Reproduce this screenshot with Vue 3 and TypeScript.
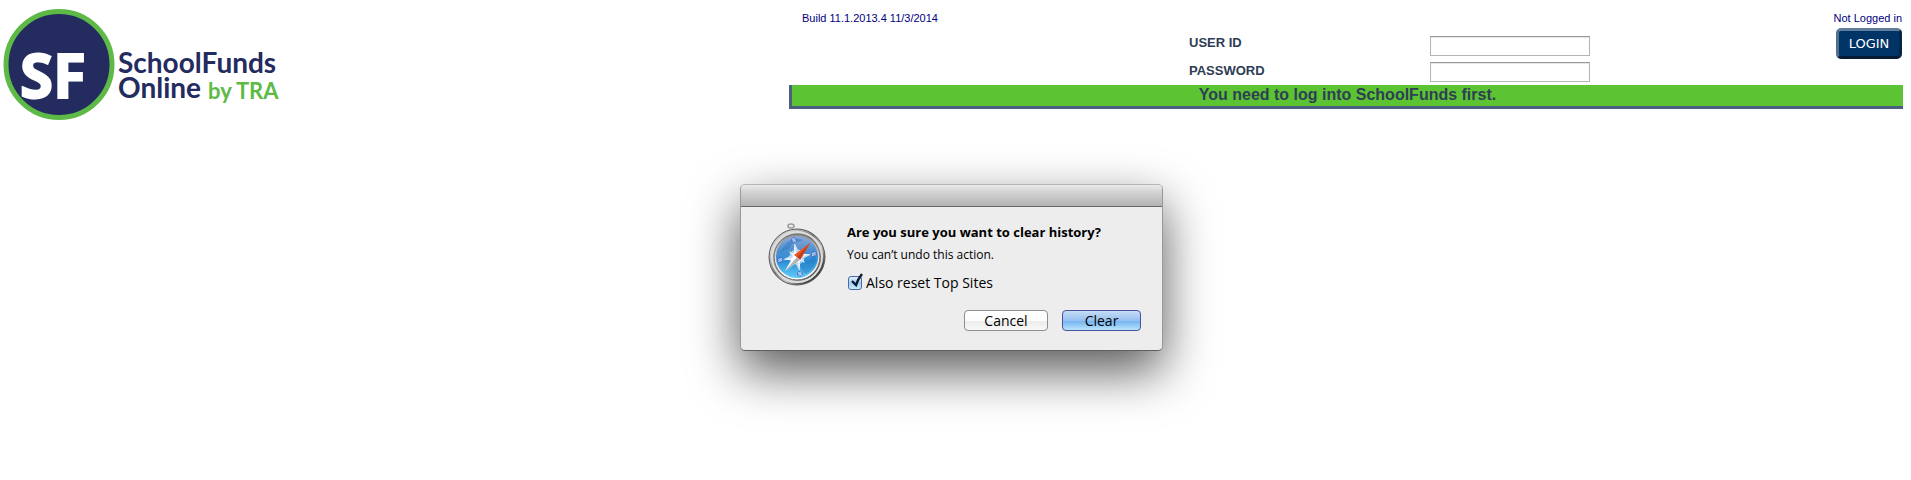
<script setup lang="ts">
import { ref } from 'vue'

const build = 'Build 11.1.2013.4 11/3/2014'
const userId = ref('')
const password = ref('')
const dialogOpen = ref(true)
const resetTopSites = ref(true)

const ticks = [0, 90, 180, 270]

function closeDialog(): void {
  dialogOpen.value = false
}
</script>

<template>
  <div class="page">
    <header class="header">
      <a class="brand" href="#" aria-label="SchoolFunds Online by TRA">
        <svg class="logo" width="284" height="124" viewBox="0 0 284 124">
          <circle cx="59" cy="64.5" r="53" fill="#232b5f" stroke="#5dba47" stroke-width="5" />
          <text class="logo-initials" x="20" y="98">SF</text>
          <text class="logo-name" x="118" y="73">SchoolFunds</text>
          <text class="logo-name" x="118" y="98">Online</text>
          <text class="logo-by" x="208" y="99">by TRA</text>
        </svg>
      </a>

      <form class="panel" @submit.prevent>
        <div class="status">
          <span>{{ build }}</span>
          <span>Not Logged in</span>
        </div>
        <div class="credentials">
          <div class="labels">
            <label for="user-id">USER ID</label>
            <label for="password">PASSWORD</label>
          </div>
          <div class="fields">
            <input id="user-id" v-model="userId" type="text" />
            <input id="password" v-model="password" type="password" />
          </div>
          <button class="login" type="submit">LOGIN</button>
        </div>
        <p class="notice">You need to log into SchoolFunds first.</p>
      </form>
    </header>

    <section v-if="dialogOpen" class="dialog" role="alertdialog" aria-labelledby="dialog-title">
      <div class="titlebar"></div>
      <div class="dialog-body">
        <svg class="compass" width="60" height="66" viewBox="0 0 60 66" aria-hidden="true">
          <defs>
            <linearGradient id="rim" x1="0" y1="0" x2="1" y2="1">
              <stop offset="0" stop-color="#777" />
              <stop offset="0.2" stop-color="#d4d4d4" />
              <stop offset="0.45" stop-color="#777" />
              <stop offset="0.62" stop-color="#c4c4c4" />
              <stop offset="0.8" stop-color="#444" />
              <stop offset="1" stop-color="#222" />
            </linearGradient>
            <linearGradient id="bezel" x1="0" y1="0" x2="0" y2="1">
              <stop offset="0" stop-color="#8b8b8b" />
              <stop offset="0.5" stop-color="#d8d8d8" />
              <stop offset="1" stop-color="#ffffff" />
            </linearGradient>
            <linearGradient id="face" x1="0" y1="0" x2="0" y2="1">
              <stop offset="0" stop-color="#8fa9d6" />
              <stop offset="0.35" stop-color="#4d8fd0" />
              <stop offset="0.6" stop-color="#2b8fd8" />
              <stop offset="1" stop-color="#63cdf6" />
            </linearGradient>
          </defs>
          <ellipse cx="24" cy="4" rx="3" ry="2" fill="none" stroke="#999" stroke-width="1.5" />
          <path d="M21 8h6l1 3h-8z" fill="#aaa" />
          <circle cx="30" cy="35" r="28" fill="url(#rim)" stroke="#5a5a5a" />
          <circle cx="30" cy="35" r="25" fill="none" stroke="#dedede" stroke-width="2" />
          <circle cx="30" cy="35" r="23" fill="url(#bezel)" stroke="#6d6d6d" />
          <circle cx="30" cy="35" r="21" fill="url(#face)" />
          <path
            d="M13 32c4-6 9-3 11-8s8-3 12-6c-7-4-18-1-23 14zM33 42c4-4 8-2 11-5 2-3 4-2 5 0-1 7-5 12-10 15-3-2-6-6-6-10z"
            fill="#2478be"
            opacity="0.45"
          />
          <g transform="rotate(-10 30 35)">
            <g v-for="angle in ticks" :key="angle" :transform="`rotate(${angle} 30 35)`">
              <path d="M30 21l3 11-3 3-3-3z" fill="#fff" />
              <path d="M30 21l3 11-3 3z" fill="#c3daf0" />
              <path d="M37 28l-3 6-3-3z" fill="#e6f4ff" />
              <circle cx="30" cy="18" r="3" fill="#4169c6" opacity="0.7" />
              <path d="M29 20v-4l2 4v-4" fill="none" stroke="#cfe2fa" stroke-width="0.8" />
            </g>
            <circle cx="30" cy="35" r="7" fill="none" stroke="#c7e1f5" stroke-width="1" />
          </g>
          <path d="M43 21L27 33l6 5z" fill="#f0521f" />
          <path d="M43 21L30 35l3 3z" fill="#c63d18" />
          <path d="M18 49l9-16 6 5z" fill="#fff" />
          <path d="M18 49l12-14 3 3z" fill="#b5b5b9" />
        </svg>

        <div class="message">
          <h1 id="dialog-title">Are you sure you want to clear history?</h1>
          <p>You can’t undo this action.</p>
          <label class="option">
            <span class="tickbox">
              <input v-model="resetTopSites" type="checkbox" />
              <svg v-if="resetTopSites" width="16" height="16" viewBox="0 0 16 16" aria-hidden="true">
                <path d="M3 8l4 4q2-6 6-11" fill="none" stroke="#0b1a35" stroke-width="2.4" />
              </svg>
            </span>
            <span>Also reset Top Sites</span>
          </label>
        </div>
      </div>
      <div class="actions">
        <button class="cancel" type="button" @click="closeDialog">Cancel</button>
        <button class="clear" type="button" @click="closeDialog">Clear</button>
      </div>
    </section>
  </div>
</template>

<style>
body {
  margin: 0;
  background: #fff;
}
</style>

<style scoped>
.page {
  padding: 0 8px 80px 0;
  font-family: 'Liberation Sans', Arial, sans-serif;
}

.header {
  display: flex;
  justify-content: space-between;
  align-items: flex-start;
}

.brand,
.logo {
  display: block;
}

.logo-initials {
  font: 700 60px 'Open Sans', sans-serif;
  fill: #fff;
  stroke: #fff;
  stroke-width: 2px;
}

.logo-name {
  font: 700 28px Lato, sans-serif;
  fill: #232b5f;
}

.logo-by {
  font: 700 22px Lato, sans-serif;
  fill: #5dba47;
}

.panel {
  width: 58.54%;
  padding-top: 11px;
}

.status {
  display: flex;
  justify-content: space-between;
  padding: 0 1px 0 13px;
  font-size: 11px;
  line-height: 14px;
  color: #000080;
}

.credentials {
  display: flex;
  justify-content: flex-end;
  align-items: flex-start;
  padding: 3px 1px 0 0;
}

.labels {
  display: flex;
  flex-direction: column;
  width: 241px;
  color: #2e3d54;
  font-size: 13px;
  font-weight: 700;
  line-height: 29px;
}

.labels label {
  height: 28px;
}

.fields {
  display: flex;
  flex-direction: column;
  gap: 6px;
  margin: 8px 246px 3px 0;
}

.fields input {
  box-sizing: border-box;
  width: 160px;
  height: 20px;
  padding: 1px 3px;
  border: 1px solid #b4b4b4;
  border-top-color: #999;
  box-shadow: inset 0 1px 1px #e4e4e4;
  background: #fff;
  font-size: 13px;
}

.login {
  width: 66px;
  height: 31px;
  padding: 0;
  border: 3px solid;
  border-color: #5f7d9c #062648 #061a33 #4f6f90;
  border-radius: 5px;
  background: #003366;
  color: #fff;
  font: 500 13px Verdana, 'DejaVu Sans', sans-serif;
}

.notice {
  margin: 0;
  border-left: 3px solid #4a607e;
  border-bottom: 3px solid #4a607e;
  background: #5cc433;
  color: #2e3f54;
  font-size: 16px;
  font-weight: 700;
  line-height: 20px;
  padding-bottom: 1px;
  text-align: center;
}

.dialog {
  box-sizing: border-box;
  width: 423px;
  margin: 60px auto 0;
  border: 1px solid;
  border-color: #b5b5b5 #999 #5f5f5f;
  border-radius: 5px;
  background: #ededed;
  box-shadow: 0 20px 50px rgba(0, 0, 0, 0.66);
  color: #000;
  font-family: 'Lucida Grande', 'Open Sans', sans-serif;
  font-size: 13px;
}

.titlebar {
  height: 21px;
  border-bottom: 1px solid #686868;
  border-radius: 4px 4px 0 0;
  background: linear-gradient(#ebebeb, #d5d5d5 30%, #b3b3b3);
}

.dialog-body {
  display: flex;
  gap: 20px;
  padding: 15px 20px 0 26px;
}

.compass {
  flex: none;
}

.message {
  padding-top: 1px;
}

h1 {
  margin: 0;
  font-size: 13px;
  line-height: 18px;
}

.message p {
  margin: 6px 0 0;
  font-size: 12px;
  line-height: 16px;
}

.option {
  display: flex;
  align-items: center;
  gap: 4px;
  margin-top: 11px;
  font-size: 14px;
  line-height: 18px;
}

.tickbox {
  position: relative;
  display: flex;
  margin-left: 1px;
}

.tickbox input {
  appearance: none;
  width: 14px;
  height: 14px;
  margin: 0;
  border: 1px solid #4b67a4;
  border-radius: 3px;
  background: linear-gradient(#e3effc, #a4cdf5 50%, #c9edff);
}

.tickbox svg {
  position: absolute;
  left: 1px;
  bottom: 1px;
  pointer-events: none;
}

.actions {
  display: flex;
  justify-content: flex-end;
  gap: 14px;
  padding: 18px 21px 19px;
}

.actions button {
  height: 21px;
  padding: 0;
  border: 1px solid #8e8e8e;
  border-radius: 4px;
  color: #000;
  font: 14px/18px 'Lucida Grande', 'Open Sans', sans-serif;
}

.actions .cancel {
  width: 84px;
  background: linear-gradient(#fff, #fdfdfd 50%, #ececec 52%, #f8f8f8);
}

.actions .clear {
  width: 79px;
  border-color: #4a529c;
  background: linear-gradient(#c6dcf5, #97c1f0 50%, #72b2f0 52%, #b9e4fd);
}
</style>
